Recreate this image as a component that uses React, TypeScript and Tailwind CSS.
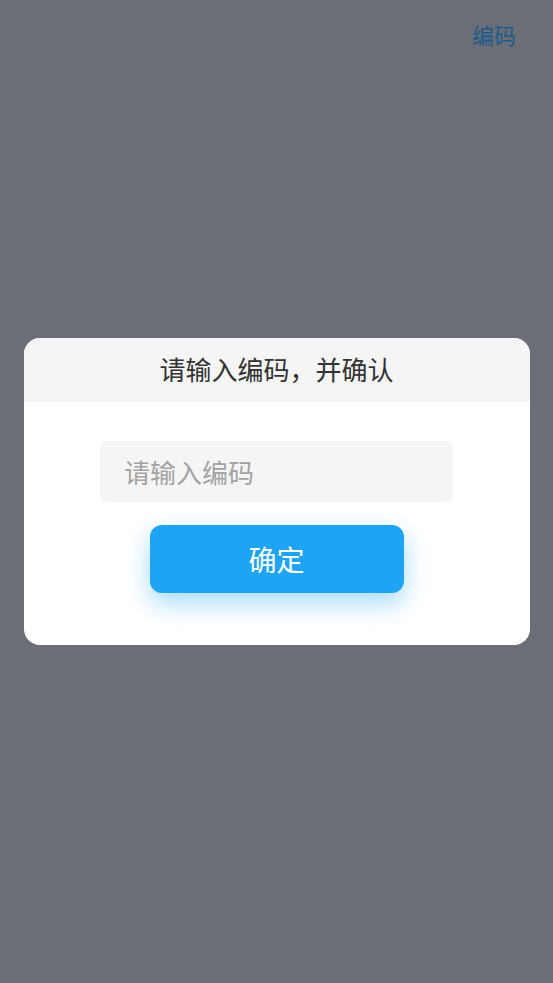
export default function App() {
  return (
    <div
      className="relative h-[983px] w-full bg-[#6b6e77]"
      style={{ fontFamily: '"Noto Sans CJK SC", "Noto Sans", sans-serif' }}
    >
      <div className="flex justify-end pt-[18px] pr-[37px]">
        <span className="text-[22px] leading-[32px] text-[#1d5b8c]">编码</span>
      </div>

      <div className="absolute inset-0 flex items-center justify-center">
        <div className="w-[506px] overflow-hidden rounded-[16px] bg-white">
          <div className="flex h-[64px] items-center justify-center bg-[#f5f5f5] pb-[4px]">
            <h2 className="text-[26px] text-[#333333]">请输入编码，并确认</h2>
          </div>
          <div className="flex flex-col items-center pt-[39px] pb-[52px]">
            <input
              className="h-[61px] w-[353px] rounded-[6px] bg-[#f5f5f5] px-[24px] text-[26px] text-[#333] outline-none placeholder:text-[#a3a3a3]"
              placeholder="请输入编码"
            />
            <button className="mt-[23px] h-[68px] w-[254px] rounded-[12px] bg-[#1ea4f3] text-[28px] text-white shadow-[0_10px_24px_rgba(30,164,243,0.4)]">
              确定
            </button>
          </div>
        </div>
      </div>
    </div>
  );
}
